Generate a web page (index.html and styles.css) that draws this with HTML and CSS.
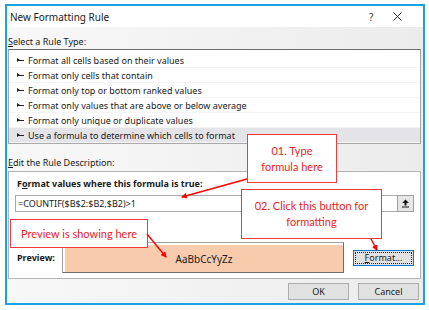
FILE: index.html
```html
<!DOCTYPE html>
<html lang="en">
<head>
  <meta charset="UTF-8" />
  <title>New Formatting Rule</title>
  <link rel="stylesheet" href="styles.css">
</head>
<body>
  <div class="dialog">
    <div class="titlebar">
      <span class="title">New Formatting Rule</span>
      <span class="help">?</span>
      <svg class="close" width="9" height="9" viewBox="0 0 9 9"><path d="M0.5 0.5 L8.5 8.5 M8.5 0.5 L0.5 8.5" stroke="#333" stroke-width="1"/></svg>
    </div>
    <div class="content">
      <div class="label first"><u>S</u>elect a Rule Type:</div>
      <ul class="rules">
        <li><i class="mark"></i>Format all cells based on their values</li>
        <li><i class="mark"></i>Format only cells that contain</li>
        <li><i class="mark"></i>Format only top or bottom ranked values</li>
        <li><i class="mark"></i>Format only values that are above or below average</li>
        <li><i class="mark"></i>Format only unique or duplicate values</li>
        <li class="active"><i class="mark"></i>Use a formula to determine which cells to format</li>
      </ul>
      <div class="label second"><u>E</u>dit the Rule Description:</div>
      <div class="group">
        <div class="sub">F<u>o</u>rmat values where this formula is true:</div>
        <div class="formula-row">
          <div class="formula">=COUNTIF($B$2:$B2,$B2)&gt;1</div>
          <div class="ref">
            <svg width="9" height="9" viewBox="0 0 9 9"><path d="M4.5 0.5 L8 4 L5.5 4 L5.5 6.5 L3.5 6.5 L3.5 4 L1 4 Z" fill="#111"/><rect x="1" y="7.5" width="7" height="1" fill="#111"/></svg>
          </div>
        </div>
        <div class="preview-row">
          <span class="sub preview-label">Preview:</span>
          <div class="preview"><div class="swatch">AaBbCcYyZz</div></div>
          <div class="btn format"><span class="focus"><u>F</u>ormat...</span></div>
        </div>
      </div>
      <div class="actions">
        <div class="btn">OK</div>
        <div class="btn">Cancel</div>
      </div>
    </div>
  </div>

  <!-- annotations -->
  <div class="callout c1">01. Type<br>formula here</div>
  <div class="callout c2">02. Click this button for<br>formatting</div>
  <div class="callout c3">Preview is showing here</div>
  <svg class="arrows" width="429" height="310" viewBox="0 0 429 310">
    <defs>
      <marker id="head" markerWidth="6" markerHeight="6" refX="5" refY="3" orient="auto" markerUnits="userSpaceOnUse">
        <path d="M0 0 L6 3 L0 6 Z" fill="#f00"/>
      </marker>
    </defs>
    <line x1="247" y1="179" x2="182" y2="197" stroke="#f00" stroke-width="1.5" marker-end="url(#head)"/>
    <line x1="371" y1="239" x2="377" y2="250" stroke="#f00" stroke-width="1.5" marker-end="url(#head)"/>
    <line x1="147" y1="234" x2="166" y2="257" stroke="#f00" stroke-width="1.5" marker-end="url(#head)"/>
  </svg>
</body>
</html>
```

FILE: styles.css
```css
body {
  margin: 0;
  background: #ffffff;
  font-family: 'Noto Sans', sans-serif;
  font-size: 9px;
  color: #1a1a1a;
  position: relative;
  width: 429px;
  height: 310px;
  overflow: hidden;
}
.dialog {
  margin: 4px 0 0 5px;
  width: 416px;
  height: 297px;
  border: 2px solid #17a3e6;
  background: linear-gradient(90deg, #f8f8f8, #ececec);
}
.titlebar {
  height: 21px;
  background: #ffffff;
  display: flex;
  align-items: center;
  padding-left: 3px;
}
.title {
  font-size: 10px;
  flex: 1;
}
.help {
  font-size: 10px;
  width: 24px;
  color: #333;
}
.close {
  margin-right: 21px;
}
.content {
  padding: 0 2px 0 1px;
}
.label {
  line-height: 12px;
}
.label.first {
  padding-top: 9px;
  margin-bottom: 1px;
}
.label.second {
  margin-top: 13px;
  margin-bottom: 2px;
}
.rules {
  list-style: none;
  margin: 0;
  padding: 3px 0 0;
  height: 90px;
  background: #ffffff;
  border: 1px solid #a9a9a9;
  border-top-color: #6d6d6d;
}
.rules li {
  height: 15px;
  line-height: 15px;
  padding-left: 8px;
  display: flex;
  align-items: center;
  border-bottom: 1px solid #f4f4f4;
  box-sizing: border-box;
}
.rules li.active {
  background: #e3e3e8;
}
.mark {
  display: inline-block;
  width: 7px;
  height: 1px;
  background: #222;
  margin-right: 4px;
  position: relative;
}
.mark::before {
  content: "";
  position: absolute;
  left: 0;
  top: -2px;
  border-left: 3px solid #222;
  border-top: 2.5px solid transparent;
  border-bottom: 2.5px solid transparent;
}
.group {
  height: 100px;
  border: 1px solid #b4b4b4;
  background: #ffffff;
  padding: 6px 6px 0;
}
.sub {
  font-weight: bold;
  line-height: 12px;
  padding-left: 2px;
}
.formula-row {
  display: flex;
  margin-top: 5px;
  height: 17px;
}
.formula {
  flex: 1;
  border: 1px solid #a9a9a9;
  border-right: none;
  background: #ffffff;
  line-height: 15px;
  padding-left: 2px;
}
.ref {
  width: 15px;
  border: 1px solid #a0a0a0;
  background: #e6e6e6;
  display: flex;
  align-items: center;
  justify-content: center;
}
.preview-row {
  display: flex;
  align-items: center;
  margin-top: 30px;
}
.preview-label {
  width: 45px;
}
.preview {
  box-sizing: border-box;
  height: 31px;
  width: 282px;
  border: 1px solid #a0a0a0;
  border-right-color: #6d6d6d;
  border-bottom-color: #6d6d6d;
  background: #ffffff;
  padding: 2px 0 0 2px;
}
.swatch {
  height: 27px;
  background: #f8cbad;
  display: flex;
  align-items: center;
  justify-content: center;
  font-size: 10px;
}
.btn {
  width: 61px;
  height: 17px;
  box-sizing: border-box;
  border: 1px solid #adadad;
  background: #e1e1e1;
  display: flex;
  align-items: center;
  justify-content: center;
}
.btn.format {
  margin-left: 9px;
  height: 16px;
  border-color: #0078d7;
  padding: 1px;
}
.focus {
  flex: 1;
  align-self: stretch;
  border: 1px dotted #222;
  display: flex;
  align-items: center;
  justify-content: center;
}
.actions {
  display: flex;
  justify-content: flex-end;
  gap: 9px;
  margin-top: 4px;
  padding-right: 2px;
}
.callout {
  position: absolute;
  box-sizing: border-box;
  background: #ffffff;
  border: 1px solid #f0393f;
  color: #f01c24;
  font-family: 'Lato', sans-serif;
  font-size: 11px;
  line-height: 16px;
  display: flex;
  align-items: center;
  justify-content: center;
  text-align: center;
}
.c1 {
  left: 247px;
  top: 134px;
  width: 90px;
  height: 49px;
}
.c2 {
  left: 241px;
  top: 189px;
  width: 141px;
  height: 50px;
}
.c3 {
  left: 10px;
  top: 219px;
  width: 138px;
  height: 29px;
}
.arrows {
  position: absolute;
  left: 0;
  top: 0;
  pointer-events: none;
}
```
